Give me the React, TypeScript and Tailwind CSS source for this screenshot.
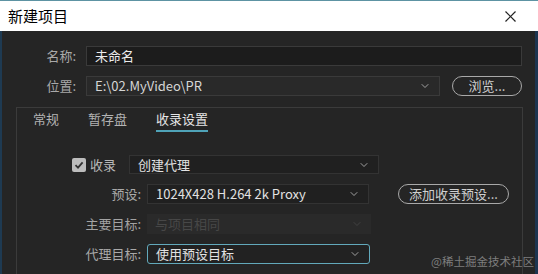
import React from "react";
import { ChevronDown } from "lucide-react";

const font = { fontFamily: '"Noto Sans CJK SC", "Liberation Sans", sans-serif' };

const Select = ({
  text,
  className,
  textClass = "text-[#e2e2e2]",
  chevron = "text-[#c8c8c8]",
}: {
  text: string;
  className: string;
  textClass?: string;
  chevron?: string;
}) => (
  <div className={`flex items-center justify-between pl-2 pr-2 text-[13px] ${className}`}>
    <span className={textClass}>{text}</span>
    <ChevronDown size={12} strokeWidth={1.5} className={chevron} />
  </div>
);

const Pill = ({ text, className }: { text: string; className: string }) => (
  <div
    className={`flex items-center justify-center rounded-full border border-[#a9a9a9] text-[13px] text-[#cfcfcf] ${className}`}
  >
    {text}
  </div>
);

export default function App() {
  return (
    <div className="relative flex h-[274px] w-[538px] flex-col overflow-hidden bg-[#242424]" style={font}>
      <div className="h-px bg-[#5d93a3]" />
      <div className="flex h-[30px] items-center justify-between bg-white pl-2 pr-[22px]">
        <span className="text-[15px] text-black">新建项目</span>
        <svg width="11" height="11" viewBox="0 0 11 11" stroke="#222" strokeWidth="1.2">
          <line x1="0.5" y1="0.5" x2="10.5" y2="10.5" />
          <line x1="10.5" y1="0.5" x2="0.5" y2="10.5" />
        </svg>
      </div>

      <div className="flex flex-1">
        <div className="w-[2px] bg-[#1e3a52]" />
        <div className="flex flex-1 flex-col bg-[#252525] pt-[15px]">
          <div className="flex h-[20px] items-center">
            <span className="w-[78px] pr-1 text-right text-[13px] text-[#a9a9a9]">名称:</span>
            <div className="ml-[6px] flex h-[20px] w-[436px] items-center border border-[#3a3a3a] bg-[#1c1c1c] pl-2 text-[13px] text-[#ececec]">
              未命名
            </div>
          </div>

          <div className="mt-[10px] flex h-[20px] items-center">
            <span className="w-[78px] pr-1 text-right text-[13px] text-[#a9a9a9]">位置:</span>
            <Select
              text="E:\02.MyVideo\PR"
              className="ml-[6px] h-[20px] w-[354px] border border-[#3a3a3a] bg-[#292929]"
              textClass="text-[#d6d6d6]"
            />
            <Pill text="浏览..." className="ml-3 h-[20px] w-[70px]" />
          </div>

          <div className="ml-[14px] mr-[12px] mt-[11px] flex flex-1 flex-col border-l border-r border-t border-[#3b3b3b]">
            <div className="flex h-[24px] items-end gap-[29px] pl-4">
              <span className="pb-[4px] text-[13px] text-[#b3b3b3]">常规</span>
              <span className="pb-[4px] text-[13px] text-[#b3b3b3]">暂存盘</span>
              <span className="border-b-2 border-[#4fa3b8] pb-[2px] text-[13px] text-[#e6e6e6]">收录设置</span>
            </div>

            <div className="mt-[23px] flex h-[19px] items-center pl-[55px]">
              <div className="flex h-[14px] w-[14px] items-center justify-center rounded-[2px] bg-[#bdbdbd]">
                <svg width="10" height="10" viewBox="0 0 10 10" fill="none" stroke="#333" strokeWidth="1.8">
                  <path d="M1.5 5.2 L4 7.6 L8.6 2.4" />
                </svg>
              </div>
              <span className="ml-1 text-[13px] text-[#b8b8b8]">收录</span>
              <Select text="创建代理" className="ml-[13px] h-[19px] w-[250px] border border-[#333] bg-[#202020]" />
            </div>

            <div className="mt-[10px] flex h-[20px] items-center">
              <span className="w-[126px] pr-[2px] text-right text-[13px] text-[#a9a9a9]">预设:</span>
              <Select
                text="1024X428 H.264 2k Proxy"
                className="ml-[4px] h-[20px] w-[222px] border border-[#333] bg-[#202020]"
              />
              <Pill text="添加收录预设..." className="ml-[29px] h-[20px] w-[111px]" />
            </div>

            <div className="mt-[10px] flex h-[20px] items-center">
              <span className="w-[126px] pr-[2px] text-right text-[13px] text-[#a3a3a3]">主要目标:</span>
              <Select
                text="与项目相同"
                className="ml-[4px] h-[20px] w-[224px] bg-[#2a2a2a]"
                textClass="text-[#474747]"
                chevron="text-[#4a4a4a]"
              />
            </div>

            <div className="mt-[10px] flex h-[20px] items-center">
              <span className="w-[126px] pr-[2px] text-right text-[13px] text-[#a9a9a9]">代理目标:</span>
              <Select
                text="使用预设目标"
                className="ml-[4px] h-[20px] w-[223px] rounded-[3px] border border-[#62a9bb] bg-[#222]"
              />
            </div>
          </div>
        </div>
        <div className="w-[3px] bg-[#1d3550]" />
      </div>

      <span className="absolute bottom-[4px] right-[4px] text-[11.5px] text-[#7e7e7e]">@稀土掘金技术社区</span>
    </div>
  );
}
